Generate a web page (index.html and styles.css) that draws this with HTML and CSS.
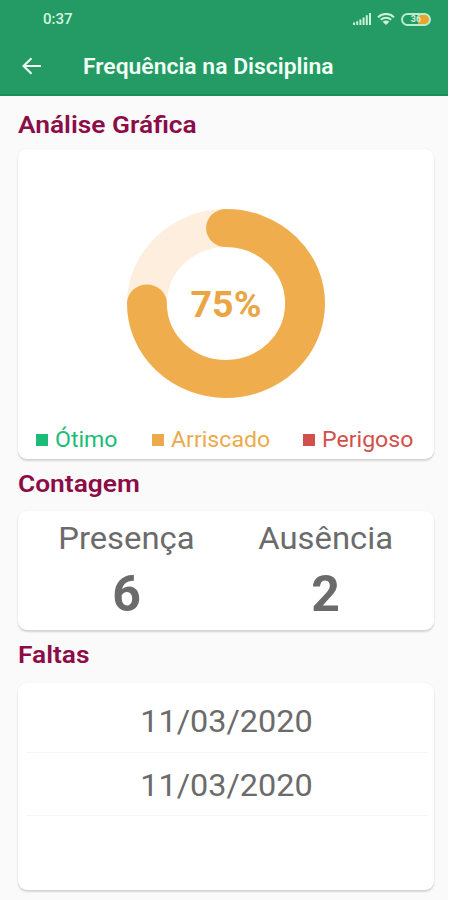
FILE: index.html
```
<!DOCTYPE html>
<html lang="pt-BR">
<head>
  <meta charset="UTF-8">
  <meta name="viewport" content="width=device-width, initial-scale=1.0">
  <title>Frequência na Disciplina</title>
  <link rel="stylesheet" href="styles.css">
</head>
<body>
  <header>
    <div class="status-bar">
      <span class="clock wide">0:37</span>
      <div class="status-icons">
        <svg class="signal" viewBox="0 0 18 12">
          <path d="M0 12V9.5h2V12zM3.2 12V8.2h2V12zM6.4 12V6.4h2V12zM9.6 12V4.4h2V12zM12.8 12V2.2h2V12zM16 12V0h2v12z"/>
        </svg>
        <svg class="wifi" viewBox="0 0 18 12">
          <path d="M1 4.2C5.5-.2 12.5-.2 17 4.2M3.8 6.8c3-2.7 7.4-2.7 10.4 0"/>
          <path class="dot" d="M5.6 8.7c2-1.5 4.8-1.5 6.8 0L9 12z"/>
        </svg>
        <div class="battery"><span>36</span></div>
      </div>
    </div>
    <nav>
      <svg class="back" viewBox="0 0 20 18">
        <path d="M19 9H2M9.5 1.3L1.5 9l8 7.7"/>
      </svg>
      <h1 class="page-title">Frequência na Disciplina</h1>
    </nav>
  </header>

  <main>
    <h2>Análise Gráfica</h2>
    <section class="card chart-card">
      <div class="chart">
        <svg viewBox="0 0 188.6 188.6" preserveAspectRatio="none">
          <circle class="track" cx="94.3" cy="94.3" r="75.3"/>
          <path class="progress" d="M94.3 19A75.3 75.3 0 1 1 19 94.3"/>
        </svg>
        <span class="percent">75%</span>
      </div>
      <ul class="legend">
        <li class="good"><span class="wide">Ótimo</span></li>
        <li class="risky"><span class="wide">Arriscado</span></li>
        <li class="danger"><span class="wide">Perigoso</span></li>
      </ul>
    </section>

    <h2>Contagem</h2>
    <section class="card count-card">
      <div class="count">
        <span class="label">Presença</span>
        <strong>6</strong>
      </div>
      <div class="count">
        <span class="label">Ausência</span>
        <strong>2</strong>
      </div>
    </section>

    <h2>Faltas</h2>
    <section class="card absences-card">
      <ul class="absences">
        <li><span>11/03/2020</span></li>
        <li><span>11/03/2020</span></li>
      </ul>
    </section>
  </main>
</body>
</html>
```

FILE: styles.css
```
* {
  margin: 0;
  padding: 0;
  box-sizing: border-box;
}

body {
  font-family: Roboto, sans-serif;
  background: #fafafa;
  color: #6b6b6b;
  height: 900px;
  border-right: 2px solid #fff;
  overflow: hidden;
}

ul {
  list-style: none;
}

.wide {
  display: inline-block;
  transform: scaleX(1.075);
  transform-origin: left center;
  white-space: nowrap;
}

/* Cabecera */
header {
  height: 96px;
  background: #249b64;
  border-bottom: 2px solid #16905a;
  color: #f1fff6;
}

.status-bar {
  display: flex;
  justify-content: space-between;
  align-items: center;
  height: 38px;
  padding: 0 17px 0 43px;
}

.clock {
  font-size: 14px;
  font-weight: 500;
  color: #d5f5e2;
}

.status-icons {
  display: flex;
  align-items: center;
  gap: 6px;
}

.signal,
.wifi {
  width: 18px;
  height: 12px;
  fill: #c9f2da;
}

.wifi {
  fill: none;
  stroke: #c9f2da;
  stroke-width: 2;
}

.wifi .dot {
  fill: #c9f2da;
  stroke: none;
}

.battery {
  width: 30px;
  height: 13px;
  border: 2px solid #b9eccd;
  border-radius: 7px;
  background: linear-gradient(90deg, #249b64 58%, #e9a32e 58%);
  color: #c9f2da;
  font-size: 9px;
  line-height: 9px;
  font-weight: 700;
  text-align: center;
}

nav {
  display: flex;
  align-items: center;
  height: 56px;
  padding-left: 22px;
}

.back {
  width: 20px;
  height: 18px;
  fill: none;
  stroke: #f1fff6;
  stroke-width: 2.2;
}

.page-title {
  margin-left: 41px;
  font-size: 21.5px;
  font-weight: 600;
  transform: scaleX(1.065);
  transform-origin: left center;
}

/* Contenido */
main {
  padding: 0 14px 0 18px;
}

h2 {
  width: max-content;
  height: 52px;
  padding-top: 10px;
  font-size: 24px;
  line-height: 30px;
  font-weight: 600;
  color: #8b0c47;
  transform: scaleX(1.097);
  transform-origin: left center;
}

h2:first-child {
  height: 53px;
  padding-top: 14px;
}

.count-card + h2 {
  height: 53px;
}

.card {
  background: #fff;
  border-radius: 9px;
  box-shadow: 0 2px 2px rgba(0, 0, 0, 0.15), 0 0 2px rgba(0, 0, 0, 0.05);
}

.chart-card {
  display: flex;
  flex-direction: column;
  justify-content: space-between;
  height: 310px;
  padding: 60px 27px 4px 18px;
}

.chart {
  display: grid;
  place-items: center;
  width: 198px;
  height: 189px;
  margin-left: 91px;
}

.chart svg,
.chart .percent {
  grid-area: 1 / 1;
}

.chart svg {
  width: 100%;
  height: 100%;
  fill: none;
  stroke: #f0ad4e;
  stroke-width: 38;
}

.chart .track {
  stroke: #fdeedd;
}

.chart .progress {
  stroke-linecap: round;
}

.percent {
  font-size: 37.5px;
  font-weight: 700;
  color: #eaa545;
}

.legend {
  display: flex;
  justify-content: space-between;
}

.legend li {
  display: flex;
  align-items: center;
  font-size: 21.5px;
  line-height: 30px;
}

.legend li::before {
  content: "";
  width: 12px;
  height: 12px;
  margin-right: 7px;
  background: currentColor;
}

.good { color: #1abc78; }
.risky { color: #ecaa4d; }
.danger { color: #d2504b; }

.count-card {
  display: flex;
  height: 119px;
  padding: 0 9px;
}

.count {
  flex: 1;
  display: flex;
  flex-direction: column;
  align-items: center;
}

.count .label {
  margin-top: 8px;
  font-size: 30.5px;
  line-height: 40px;
  transform: scaleX(1.075);
}

.count strong {
  font-size: 50px;
  line-height: 70px;
}

.absences-card {
  height: 207px;
  padding: 6px 6px 0 8px;
}

.absences li {
  height: 63.5px;
  border-bottom: 1px solid #f6f6f6;
  font-size: 31px;
  line-height: 66px;
  text-align: center;
}

.absences span {
  display: inline-block;
  transform: translateX(-1px) scaleX(1.045);
}
```
